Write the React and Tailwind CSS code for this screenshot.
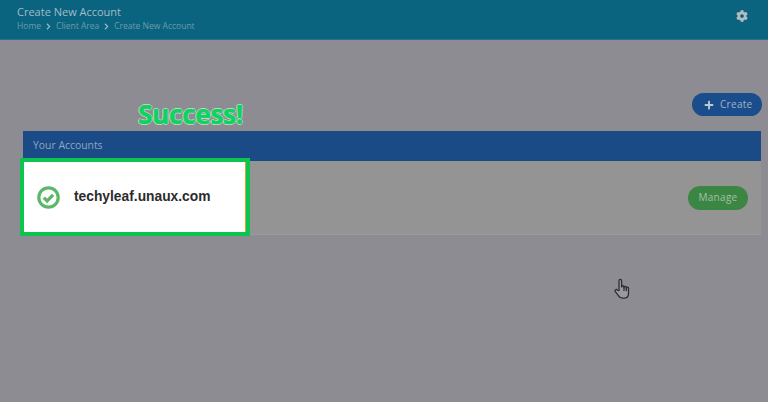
import React from 'react';
import { FaCog, FaPlus, FaChevronRight } from 'react-icons/fa';

export default function App() {
  return (
    <div className="relative w-[768px] h-[402px] overflow-hidden bg-[#8c8c92] font-['Open_Sans',sans-serif]">
      {/* Top bar */}
      <div className="flex items-start justify-between h-10 bg-[#0a6480] border-b border-[#2a7288] pl-[17px] pr-5">
        <div>
          <div className="text-[11px] leading-[14px] mt-[5px] text-[#a3bcc6]">Create New Account</div>
          <div className="flex items-center text-[8.5px] leading-[12px] mt-[1px] text-[#6f9aaa]">
            <span>Home</span>
            <FaChevronRight className="w-[7px] h-[7px] mx-[4px] text-[#a3bcc6]" />
            <span>Client Area</span>
            <FaChevronRight className="w-[7px] h-[7px] mx-[4px] text-[#a3bcc6]" />
            <span>Create New Account</span>
          </div>
        </div>
        <FaCog className="w-3 h-3 mt-[10px] text-[#b4bcc2]" />
      </div>

      {/* Page content */}
      <div className="pl-[23px] pr-[6px]">
        <div className="flex justify-end mt-[53px]">
          <div className="flex items-center h-[23px] w-[70px] pl-[12px] gap-[6px] rounded-full bg-[#1a4d8c] text-[10px] text-[#a2b2c6]">
            <FaPlus className="w-[10px] h-[10px] text-[#c0c8d2]" />
            <span className="tracking-[0.3px]">Create</span>
          </div>
        </div>
        <div className="mt-[15px] w-[738px] bg-[#949495] border-b border-[#9c9c9e]">
          <div className="flex items-center h-[30px] pl-[10px] bg-[#1a4b86] text-[10.4px] text-[#8fa6c0]">Your Accounts</div>
          <div className="flex items-center justify-end h-[73px] pr-[13px]">
            <div className="flex items-center justify-center w-[60px] h-[24px] rounded-full bg-[#3c8644] text-[10px] tracking-[0.3px] text-[#a3c0a6]">Manage</div>
          </div>
        </div>
      </div>

      {/* Annotations over the screenshot */}
      <div className="absolute left-[138px] top-[97px] text-[26.5px] leading-[34px] font-bold tracking-[-0.5px] text-[#0fd25f] [-webkit-text-stroke:0.6px_#0fd25f] [text-shadow:1px_0_0_#d8d8d8,-1px_0_0_#d8d8d8,0_1px_0_#d8d8d8,0_-1px_0_#d8d8d8]">
        Success!
      </div>
      <div className="absolute left-[20px] top-[158px] flex items-center w-[230px] h-[78px] bg-white border-4 border-[#0bc54f]">
        <svg className="ml-[13px] w-[23px] h-[23px]" viewBox="0 0 23 23" fill="none">
          <circle cx="11.5" cy="11.5" r="9.7" stroke="#5cb868" strokeWidth="3.2" />
          <path d="M6.8 11.6l3.3 3.3 6-6" stroke="#5cb868" strokeWidth="3.2" />
        </svg>
        <span className="ml-[14px] text-[13.8px] font-bold text-[#2b2b2b] font-['Liberation_Sans',sans-serif]">techyleaf.unaux.com</span>
        <div className="absolute right-0 top-0 bottom-0 w-px bg-[#e0a030]" />
      </div>
      <svg className="absolute left-[614px] top-[278px] w-[18px] h-[22px]" viewBox="0 0 18 22" fill="#9a9a9e" stroke="#2e2e32" strokeWidth="1.3" strokeLinejoin="round" strokeLinecap="round">
        <path d="M5 12.5V2.8c0-2 2.6-2 2.6 0V9c0-1.7 2.4-1.7 2.4 0v.6c0-1.6 2.3-1.6 2.3 0v.6c0-1.5 2.2-1.5 2.2 0v5.3c0 2.6-1.6 4.7-4.6 4.7H8.7c-2 0-3.2-.9-4.3-2.6L1.3 13.6c-.9-1.6 1-2.8 2.2-1.5z" />
        <path d="M10 9v3.5M12.3 10v2.5" fill="none" />
      </svg>
    </div>
  );
}
